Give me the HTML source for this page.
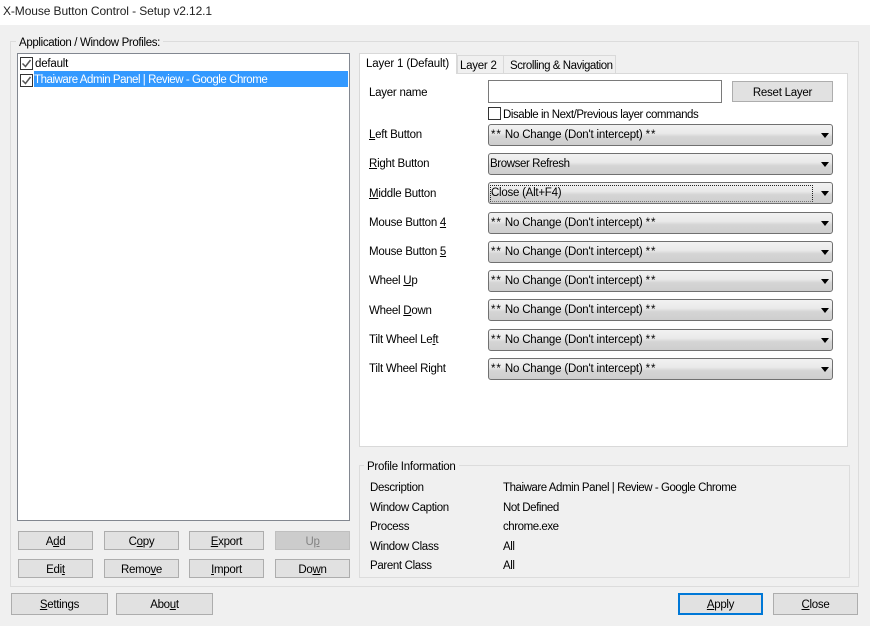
<!DOCTYPE html>
<html><head><meta charset="utf-8"><style>
html,body{margin:0;padding:0}
body{width:870px;height:626px;position:relative;overflow:hidden;background:#f0f0f0;font:11.5px/18px "Liberation Sans",sans-serif;color:#000;letter-spacing:-.45px}
div{position:absolute;box-sizing:border-box;white-space:nowrap}
.t{height:16px}
.b{background:#e1e1e1;border:1px solid #adadad;text-align:center;height:19px;line-height:20px;letter-spacing:-.3px}
.b2{height:22px;line-height:23px}
.c{left:488px;width:345px;height:22px;border:1px solid #707070;border-radius:3px;background:linear-gradient(#f2f2f2 0%,#e9e9e9 42%,#d5d5d5 58%,#cecece 100%);line-height:21px;padding-left:2px;letter-spacing:-.19px}
.c:after{content:"";position:absolute;right:3px;top:8px;border:4px solid transparent;border-top:5px solid #000;border-bottom:0}
.s{letter-spacing:.95px}
.l{left:369px;letter-spacing:-.25px}
.v{left:503px}
.i{left:370px;letter-spacing:-.35px}
.cb{width:13px;height:13px;border:1px solid #333;background:#fff}
.cb svg{position:absolute;left:0;top:0}
u{text-decoration:underline}
</style></head><body>
<div style="left:0;top:0;width:870px;height:25px;background:#fff"></div>
<div class="t" style="left:3px;top:2px;color:#222;font-size:12px;letter-spacing:-.1px">X-Mouse Button Control - Setup v2.12.1</div>

<div style="left:10px;top:41px;width:849px;height:546px;border:1px solid #dcdcdc"></div>
<div class="t" style="left:16px;top:34px;background:#f0f0f0;padding:0 3px;letter-spacing:-.35px">Application / Window Profiles:</div>

<div style="left:17px;top:53px;width:333px;height:468px;background:#fff;border:1px solid #828790"></div>
<div style="left:34px;top:71px;width:314px;height:16px;background:#3399ff"></div>
<div class="cb" style="left:20px;top:57px"><svg width="11" height="11"><path d="M1.5 5.5L4.5 8.5L9.5 2" fill="none" stroke="#555" stroke-width="1.5"/></svg></div>
<div class="cb" style="left:20px;top:74px"><svg width="11" height="11"><path d="M1.5 5.5L4.5 8.5L9.5 2" fill="none" stroke="#555" stroke-width="1.5"/></svg></div>
<div class="t" style="left:35px;top:55px;letter-spacing:-.2px">default</div>
<div class="t" style="left:34px;top:71px;color:#fff">Thaiware Admin Panel | Review - Google Chrome</div>

<div class="b" style="left:18px;top:531px;width:75px">A<u>d</u>d</div>
<div class="b" style="left:104px;top:531px;width:75px">C<u>o</u>py</div>
<div class="b" style="left:189px;top:531px;width:75px"><u>E</u>xport</div>
<div class="b" style="left:275px;top:531px;width:75px;background:#ccc;border-color:#bfbfbf;color:#838383">U<u>p</u></div>
<div class="b" style="left:18px;top:559px;width:75px">Edi<u>t</u></div>
<div class="b" style="left:104px;top:559px;width:75px">Remo<u>v</u>e</div>
<div class="b" style="left:189px;top:559px;width:75px"><u>I</u>mport</div>
<div class="b" style="left:275px;top:559px;width:75px">Do<u>w</u>n</div>

<div style="left:359px;top:73px;width:489px;height:374px;background:#fff;border:1px solid #d9d9d9"></div>
<div class="t" style="left:457px;top:55px;width:47px;height:19px;background:#f0f0f0;border:1px solid #d9d9d9;line-height:21px;padding-left:2px;letter-spacing:-.25px">Layer 2</div>
<div class="t" style="left:503px;top:55px;width:113px;height:19px;background:#f0f0f0;border:1px solid #d9d9d9;line-height:21px;padding-left:6px">Scrolling &amp; Navigation</div>
<div class="t" style="left:359px;top:53px;width:98px;height:21px;background:#fff;border:1px solid #d9d9d9;border-bottom:0;line-height:21px;padding-left:6px;letter-spacing:-.15px">Layer 1 (Default)</div>

<div class="t l" style="top:84px">Layer name</div>
<div style="left:488px;top:80px;width:234px;height:23px;background:#fff;border:1px solid #7a7a7a"></div>
<div class="b" style="left:732px;top:81px;width:101px;height:21px;line-height:22px;letter-spacing:-.25px">Reset Layer</div>
<div class="cb" style="left:488px;top:107px"></div>
<div class="t" style="left:503px;top:106px">Disable in Next/Previous layer commands</div>

<div class="t l" style="top:126px"><u>L</u>eft Button</div>
<div class="c" style="top:124px"><span class="s">**</span> No Change (Don't intercept) <span class="s">**</span></div>
<div class="t l" style="top:155px"><u>R</u>ight Button</div>
<div class="c" style="top:153px;padding-left:1px;letter-spacing:-.4px">Browser Refresh</div>
<div class="t l" style="top:185px"><u>M</u>iddle Button</div>
<div class="c" style="top:182px;letter-spacing:-.25px">Close (Alt+F4)<div style="left:1px;top:2px;width:323px;height:17px;border:1px dotted #222;border-bottom-color:#777"></div></div>
<div class="t l" style="top:214px">Mouse Button <u>4</u></div>
<div class="c" style="top:212px"><span class="s">**</span> No Change (Don't intercept) <span class="s">**</span></div>
<div class="t l" style="top:243px">Mouse Button <u>5</u></div>
<div class="c" style="top:241px"><span class="s">**</span> No Change (Don't intercept) <span class="s">**</span></div>
<div class="t l" style="top:272px">Wheel <u>U</u>p</div>
<div class="c" style="top:270px"><span class="s">**</span> No Change (Don't intercept) <span class="s">**</span></div>
<div class="t l" style="top:302px">Wheel <u>D</u>own</div>
<div class="c" style="top:299px"><span class="s">**</span> No Change (Don't intercept) <span class="s">**</span></div>
<div class="t l" style="top:331px">Tilt Wheel Le<u>f</u>t</div>
<div class="c" style="top:329px"><span class="s">**</span> No Change (Don't intercept) <span class="s">**</span></div>
<div class="t l" style="top:360px">Tilt Wheel Ri<u>g</u>ht</div>
<div class="c" style="top:358px"><span class="s">**</span> No Change (Don't intercept) <span class="s">**</span></div>

<div style="left:359px;top:465px;width:491px;height:113px;border:1px solid #dcdcdc"></div>
<div class="t" style="left:364px;top:458px;background:#f0f0f0;padding:0 3px;letter-spacing:-.25px">Profile Information</div>
<div class="t i" style="top:479px">Description</div>
<div class="t v" style="top:479px">Thaiware Admin Panel | Review - Google Chrome</div>
<div class="t i" style="top:499px">Window Caption</div>
<div class="t v" style="top:499px">Not Defined</div>
<div class="t i" style="top:518px">Process</div>
<div class="t v" style="top:518px">chrome.exe</div>
<div class="t i" style="top:538px">Window Class</div>
<div class="t v" style="top:538px">All</div>
<div class="t i" style="top:557px">Parent Class</div>
<div class="t v" style="top:557px">All</div>

<div class="b b2" style="left:11px;top:593px;width:97px"><u>S</u>ettings</div>
<div class="b b2" style="left:116px;top:593px;width:97px">Abo<u>u</u>t</div>
<div class="b b2" style="left:678px;top:593px;width:85px;border:2px solid #0078d7;line-height:21px"><u>A</u>pply</div>
<div class="b b2" style="left:773px;top:593px;width:85px"><u>C</u>lose</div>
</body></html>
